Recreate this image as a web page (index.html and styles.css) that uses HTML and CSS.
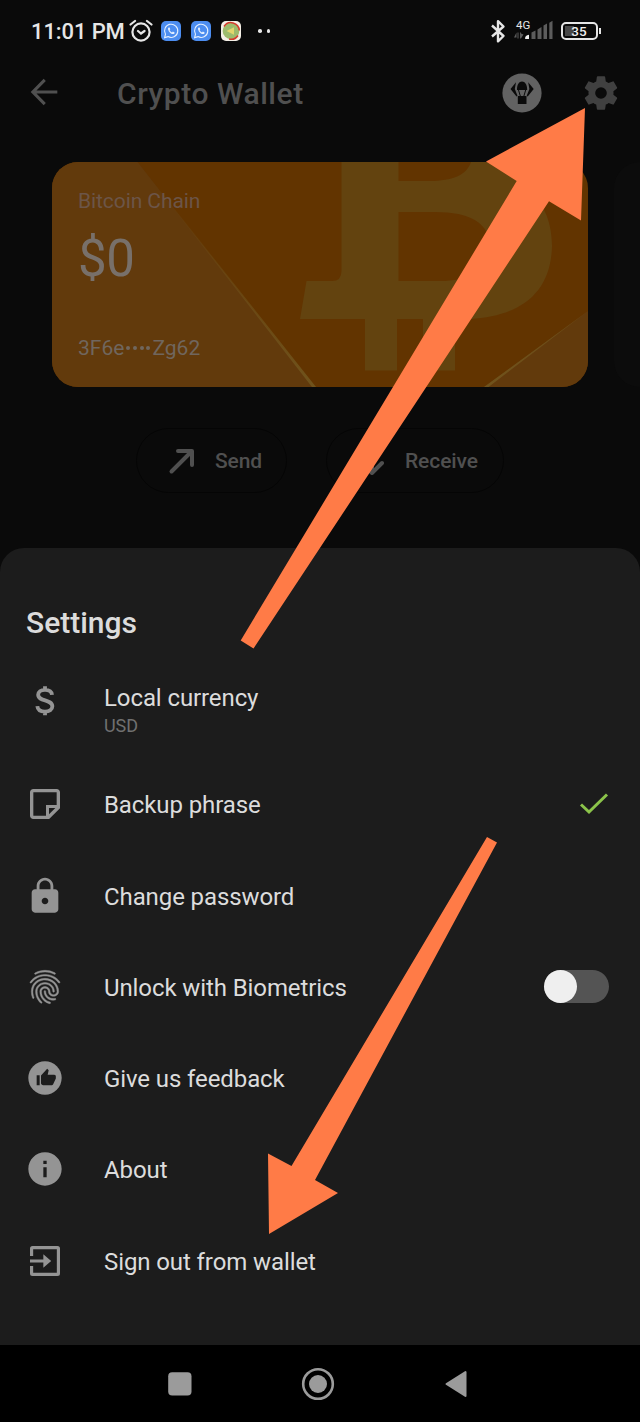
FILE: index.html
```html
<!DOCTYPE html>
<html lang="en">
<head>
<meta charset="utf-8">
<title>Crypto Wallet</title>
<link rel="stylesheet" href="styles.css">
</head>
<body>
<div class="phone">
  <header class="status">
    <span class="clock">11:01 PM</span>
    <svg class="alarm" viewBox="0 0 24 24" width="24" height="24" fill="none" stroke="#e6e6e6" stroke-width="2.2" stroke-linecap="round"><circle cx="12" cy="13" r="8.6"/><path d="M1.5 5.5l4.500-3.500M22.500 5.500L18 2M9 12l3 2.500 3.500-2.500"/></svg>
    <svg class="app" viewBox="0 0 20 20"><rect width="20" height="20" rx="5" fill="#4c8df0"/><path d="M3.600 16.600l.9-3.400a6.600 6.600 0 1 1 2.500 2.400z" fill="none" stroke="#e6f0ff" stroke-width="1.100"/><path d="M7.700 6.500c-1 .6-.9 2 .3 3.900 1.300 1.900 3.300 3 4.700 2.500.9-.4 1-1.200.9-1.500l-1.700-.8-.9.900c-1-.4-2-1.400-2.400-2.400l.7-.8-.7-1.700z" fill="#e6f0ff"/></svg>
    <svg class="app" viewBox="0 0 20 20"><rect width="20" height="20" rx="5" fill="#4c8df0"/><path d="M3.600 16.600l.9-3.400a6.600 6.600 0 1 1 2.500 2.400z" fill="none" stroke="#e6f0ff" stroke-width="1.100"/><path d="M7.700 6.500c-1 .6-.9 2 .3 3.900 1.300 1.900 3.300 3 4.700 2.500.9-.4 1-1.200.9-1.500l-1.700-.8-.9.900c-1-.4-2-1.400-2.400-2.400l.7-.8-.7-1.700z" fill="#e6f0ff"/></svg>
    <svg class="app" viewBox="0 0 20 20"><rect width="20" height="20" rx="5" fill="#f4efe6"/><circle cx="10" cy="10" r="8.300" fill="#9dbb6c"/><path d="M3 5.500A8.300 8.300 0 0 1 18.300 9.500M17 14.500A8.300 8.300 0 0 1 8 18" fill="none" stroke="#d33b2c" stroke-width="1.500"/><path d="M5.500 10L13 6.200v7.600z" fill="#e3d66d"/></svg>
    <span class="more"><i></i><i></i></span>
    <span class="spacer"></span>
    <svg class="bt" viewBox="0 0 16 24" width="16" height="24" fill="none" stroke="#e6e6e6" stroke-width="2.400" stroke-linejoin="round"><path d="M2 6.500l11.500 10.500L8 22.300V2.200L13.500 7.500 2 17.500"/></svg>
    <svg class="signal" viewBox="0 0 40 24" width="40" height="24"><text x="2" y="9.500" class="net">4G</text><g fill="#5c5c5c"><path d="M2.500 13.500v5H0zM3.500 13.500h1v6h-1zM6 13.500h1v6H6zM7 19.500v-5l2.500 1z"/><path d="M17.500 13.500l4-2v8.500h-4zM23.500 10.500l4-2.500v12h-4zM29.500 6.500l3.500-2v15.500h-3.500zM35.300 3.700l3.200-2v18.300h-3.200z"/></g><path d="M11 19.500q0-3 4-3.800V20h-3.500z" fill="#f0f0f0"/></svg>
    <span class="battery"><b>35</b></span>
  </header>

  <nav class="appbar">
    <svg class="back" viewBox="0 0 24 24" width="40" height="40" fill="#505050"><path d="M20 11.100H7.500l5.600-5.700L11.800 4.100 4 12l7.800 7.900 1.300-1.300-5.600-5.700H20z"/></svg>
    <h1 class="title">Crypto Wallet</h1>
    <svg class="drop" viewBox="0 0 40 40" width="40" height="40"><circle cx="20" cy="20" r="19.600" fill="#626262"/><path d="M15 17C15 11.500 17 8.600 20 8.600S25.200 11.500 25.200 17zM14 9.200L8.500 16l6 7.500 1-.7L12.800 16zM26.200 9.200L31.700 16l-6 7.500-1-.7L27.400 16zM15.800 23h8.700v8h-8.700z" fill="#0a0a0a"/><path d="M16.500 17l1.800 6M23.700 17l-1.800 6" stroke="#0a0a0a" stroke-width="1"/></svg>
    <svg class="gear" viewBox="0 0 24 24" width="40" height="40" fill="#404040"><path d="M19.430 12.980c.04-.32.070-.64.070-.98s-.03-.66-.07-.98l2.110-1.650c.19-.15.240-.42.120-.64l-2-3.460c-.12-.22-.39-.3-.61-.22l-2.490 1c-.52-.4-1.080-.73-1.690-.98l-.38-2.650C14.460 2.180 14.250 2 14 2h-4c-.25 0-.46.180-.49.420l-.38 2.650c-.61.250-1.170.590-1.690.98l-2.490-1c-.23-.09-.49 0-.61.220l-2 3.460c-.13.220-.07.490.12.640l2.110 1.650c-.04.320-.07.650-.07.980s.03.660.07.980l-2.110 1.650c-.19.150-.24.420-.12.640l2 3.460c.12.220.39.300.61.220l2.490-1c.52.400 1.080.730 1.690.98l.38 2.650c.03.240.24.420.49.420h4c.25 0 .46-.18.490-.42l.38-2.650c.61-.25 1.170-.59 1.690-.98l2.490 1c.23.090.49 0 .61-.22l2-3.460c.12-.22.070-.49-.12-.64zM12 15.500a3.500 3.500 0 1 1 0-7 3.500 3.500 0 0 1 0 7z"/></svg>
  </nav>

  <section class="carousel">
    <article class="card">
      <svg class="card-art" viewBox="52 162 536 225" preserveAspectRatio="none">
        <defs><linearGradient id="edge" x1="0" y1="0" x2="0" y2="1"><stop offset="0.100" stop-color="#70531c" stop-opacity="0"/><stop offset="1" stop-color="#70531c"/></linearGradient></defs>
        <rect x="52" y="162" width="536" height="225" fill="#623400"/>
        <path d="M52 162h85.500L314 387H52zM484 387L588 311v76z" fill="#623a0c"/>
        <path d="M137.500 162L312 387h4zM484 387h4.500L588 311z" fill="url(#edge)"/>
        <path fill-rule="evenodd" fill="#63430f" d="M341.500 162H545C544 172 538 183 526 190C542 199 552 220 552 246C551 292 522 316 470 319H455V370.500H423V319H397V370.500H365V319H300L306.500 281H332Q341.500 281 341.500 271ZM398.500 162V181H430C452 181 467 175 471 162ZM398.500 212V281H440C472 281 490 270 490 247C490 223 470 212 435 212Z"/>
      </svg>
      <div class="card-text">
        <span class="chain">Bitcoin Chain</span>
        <strong class="amount">$0</strong>
        <span class="address">3F6e<span class="dots"><i></i><i></i><i></i><i></i></span>Zg62</span>
      </div>
    </article>
    <div class="card-next"></div>
  </section>

  <div class="actions">
    <div class="pill send"><svg viewBox="0 0 28 28" width="28" height="28" fill="none" stroke="#505050" stroke-width="4" stroke-linecap="round"><path d="M3.500 24.500L23.500 4.500M10 4H24v14" stroke-linejoin="round"/></svg><span>Send</span></div>
    <div class="pill receive"><svg viewBox="0 0 28 28" width="28" height="28" fill="none" stroke="#505050" stroke-width="4" stroke-linecap="round"><path d="M14 2V26M4 16l10 10 10-10" stroke-linejoin="round"/></svg><span>Receive</span></div>
  </div>

  <main class="sheet">
    <h2 class="heading">Settings</h2>
    <ul class="list">
      <li class="row currency">
        <svg class="icon" viewBox="0 0 24 24"><path d="M16.200 8.300C16 6.300 14.500 5.300 12 5.300S7.900 6.500 7.900 8.300c0 4.200 8.500 2.500 8.500 6.900 0 2-1.800 3.200-4.400 3.200s-4.400-1.200-4.600-3.300M12 3.200v2M12 18.400v2.200" fill="none" stroke="#949494" stroke-width="2.300"/></svg>
        <div class="label"><span>Local currency</span><small>USD</small></div>
      </li>
      <li class="row">
        <svg class="icon" viewBox="0 0 24 24"><path d="M19 5v7.600h-6.400V19H5V5h14m0-2H5c-1.100 0-2 .9-2 2v14c0 1.100.9 2 2 2h9.500l6.500-6.500V5c0-1.100-.9-2-2-2zM14.400 14.400h3.800L14.400 18.200z" fill-rule="evenodd"/></svg>
        <div class="label">Backup phrase</div>
        <svg class="check" viewBox="0 0 30 24" width="30" height="24" fill="none" stroke="#8bc34a" stroke-width="3"><path d="M2 12.500l8 7.500L28 2.500"/></svg>
      </li>
      <li class="row">
        <svg class="icon" viewBox="0 0 24 24"><path d="M18 8h-1V6c0-2.760-2.240-5-5-5S7 3.240 7 6v2H6c-1.100 0-2 .9-2 2v10c0 1.100.9 2 2 2h12c1.100 0 2-.9 2-2V10c0-1.100-.9-2-2-2zm-6 9c-1.100 0-2-.9-2-2s.9-2 2-2 2 .9 2 2-.9 2-2 2zm3.300-9H8.700V6c0-1.820 1.480-3.300 3.300-3.300s3.300 1.480 3.300 3.300v2z"/></svg>
        <div class="label">Change password</div>
      </li>
      <li class="row">
        <svg class="icon" viewBox="0 0 24 24"><path d="M17.810 4.470c-.08 0-.16-.02-.23-.06C15.660 3.420 14 3 12.010 3c-1.980 0-3.860.47-5.570 1.410-.24.130-.54.040-.68-.2-.13-.24-.04-.55.2-.68C7.820 2.520 9.860 2 12.010 2c2.130 0 3.990.47 6.030 1.520.25.130.34.430.21.670-.09.180-.26.280-.44.280zM3.500 9.720c-.1 0-.2-.03-.29-.09-.23-.16-.28-.47-.12-.7.99-1.400 2.250-2.500 3.750-3.270C9.980 4.040 14 4.030 17.150 5.650c1.500.77 2.760 1.860 3.750 3.250.16.220.11.540-.12.700-.23.160-.54.110-.7-.12-.9-1.260-2.040-2.250-3.390-2.940-2.870-1.470-6.540-1.470-9.400.01-1.360.7-2.500 1.700-3.400 2.960-.08.140-.23.210-.39.210zm6.250 12.070c-.13 0-.26-.05-.35-.15-.87-.87-1.340-1.430-2.010-2.640-.69-1.230-1.050-2.730-1.050-4.340 0-2.970 2.540-5.390 5.660-5.390s5.660 2.420 5.660 5.390c0 .28-.22.5-.5.5s-.5-.22-.5-.5c0-2.420-2.090-4.390-4.660-4.390-2.570 0-4.660 1.970-4.660 4.390 0 1.440.32 2.770.93 3.850.64 1.150 1.080 1.640 1.850 2.420.19.200.19.510 0 .71-.11.100-.24.150-.37.150zm7.170-1.850c-1.190 0-2.240-.3-3.100-.89-1.490-1.010-2.380-2.650-2.380-4.390 0-.28.220-.5.5-.5s.5.220.5.500c0 1.410.72 2.740 1.940 3.560.71.480 1.540.71 2.540.71.240 0 .64-.03 1.040-.1.270-.05.530.130.580.410.05.270-.13.530-.41.580-.57.110-1.070.12-1.210.12zM14.910 22c-.04 0-.09-.01-.13-.02-1.590-.44-2.630-1.030-3.720-2.100-1.400-1.390-2.170-3.240-2.170-5.220 0-1.620 1.380-2.940 3.080-2.940 1.700 0 3.080 1.320 3.080 2.940 0 1.070.93 1.940 2.080 1.940s2.080-.87 2.080-1.940c0-3.770-3.250-6.830-7.250-6.830-2.840 0-5.440 1.580-6.610 4.030-.39.810-.59 1.760-.59 2.800 0 .78.070 2.010.67 3.610.1.260-.03.550-.29.640-.26.100-.55-.04-.64-.29-.49-1.310-.73-2.610-.73-3.960 0-1.200.23-2.290.68-3.240 1.330-2.790 4.280-4.600 7.510-4.600 4.550 0 8.250 3.510 8.250 7.830 0 1.620-1.380 2.940-3.080 2.940s-3.080-1.320-3.080-2.940c0-1.070-.93-1.940-2.080-1.940s-2.080.87-2.080 1.940c0 1.710.66 3.310 1.870 4.510.95.940 1.860 1.460 3.270 1.850.27.070.42.350.35.610-.05.230-.26.380-.47.380z" stroke="#949494" stroke-width=".25"/></svg>
        <div class="label">Unlock with Biometrics</div>
        <span class="toggle"><i></i></span>
      </li>
      <li class="row">
        <svg class="icon" viewBox="0 0 24 24"><circle cx="12" cy="12" r="10"/><path d="M7 10.300h1.800v6H7zM9.600 10.500l3.700-4 .9.900-.6 2.600h3.900c.7 0 1 .5 1 1v1.300l-1.600 3.500c-.2.400-.5.500-.9.500h-5c-.8 0-1.400-.4-1.400-1.100z" fill="#1c1c1c"/></svg>
        <div class="label">Give us feedback</div>
      </li>
      <li class="row">
        <svg class="icon" viewBox="0 0 24 24"><path d="M12 2C6.480 2 2 6.480 2 12s4.480 10 10 10 10-4.480 10-10S17.520 2 12 2zm1 15h-2v-6h2v6zm0-8h-2V7h2v2z"/></svg>
        <div class="label">About</div>
      </li>
      <li class="row">
        <svg class="icon" viewBox="0 0 24 24"><path d="M3 9V4.500A1.500 1.500 0 0 1 4.500 3h15A1.500 1.500 0 0 1 21 4.500v15a1.500 1.500 0 0 1-1.500 1.500h-15A1.500 1.500 0 0 1 3 19.500V15h1.900v4.100h14.200V4.900H4.900V9zM3 11.100h8V8l4.700 4-4.700 4v-3.100H3z"/></svg>
        <div class="label">Sign out from wallet</div>
      </li>
    </ul>
  </main>

  <footer class="navbar">
    <svg viewBox="0 0 24 24" width="24" height="24"><rect x=".2" y=".2" width="23.300" height="23.300" rx="4" fill="#9b9b9b"/></svg>
    <svg viewBox="0 0 34 34" width="34" height="34"><circle cx="17" cy="17" r="14.800" fill="none" stroke="#9b9b9b" stroke-width="2.600"/><circle cx="17" cy="17" r="9" fill="#9b9b9b"/></svg>
    <svg viewBox="0 0 24 28" width="24" height="28"><path d="M2.500 14L21.500 2v24z" fill="#9b9b9b" stroke="#9b9b9b" stroke-width="2" stroke-linejoin="round"/></svg>
  </footer>

  <svg class="pointers" viewBox="0 0 640 1422" width="640" height="1422" fill="#ff7b47">
    <path d="M585 108L486 161.500 516.700 181 240.700 640.500 253.500 648.500 549 201.300 581 220.500z"/>
    <path d="M269 1234L268 1153.500 291.500 1166 487 837 497 842.500 315 1180 338 1193z"/>
  </svg>
</div>
</body>
</html>
```
FILE: styles.css
```css
* { box-sizing: border-box; }
body { margin: 0; background: #0a0a0a; font-family: Roboto, "Liberation Sans", sans-serif; color: #dcdcdc; }
h1, h2, ul { margin: 0; padding: 0; }
svg { display: block; flex: none; }
.phone { position: relative; width: 640px; height: 1422px; display: flex; flex-direction: column; overflow: hidden; }
.pointers { position: absolute; inset: 0; }

.status { height: 62px; flex: none; display: flex; align-items: center; padding: 0 42.500px 0 31px; }
.clock { width: 98px; font-size: 22px; font-weight: 500; color: #e6e6e6; white-space: nowrap; letter-spacing: -.1px; padding-top: 1px; }
.alarm { margin-top: -1px; }
.app { width: 20px; height: 20px; margin-left: 8px; }
.app + .app { margin-left: 10px; }
.more { display: flex; gap: 5px; margin-left: 17px; }
.more i { width: 3.500px; height: 3.500px; border-radius: 50%; background: #e6e6e6; }
.spacer { flex: 1; }
.bt { margin-right: 8px; }
.signal { margin-right: 7px; }
.net { font-size: 11.500px; fill: #e6e6e6; }
.battery { position: relative; width: 37px; height: 18px; border: 2px solid #e6e6e6; border-radius: 5px; display: flex; align-items: center; justify-content: center; font-size: 13.500px; background: linear-gradient(#484848, #484848) 2px 2px / 9px 10px no-repeat; }
.battery::after { content: ""; position: absolute; left: 36px; top: 4px; width: 2.500px; height: 6px; background: #e6e6e6; }
.battery b { font-weight: 500; color: #f0f0f0; }

.appbar { height: 62px; flex: none; display: flex; align-items: center; padding: 0 19.500px 0 24px; }
.back { margin-top: -2px; }
.title { margin-left: 53px; flex: 1; font-size: 30px; font-weight: 500; line-height: 40px; color: #505050; letter-spacing: .55px; padding-top: 2px; }
.gear { margin-left: 38.500px; }

.carousel { height: 225px; flex: none; margin-top: 38px; padding-left: 52px; display: flex; gap: 26px; overflow: hidden; }
.card { position: relative; width: 536px; height: 225px; flex: none; border-radius: 26px; overflow: hidden; }
.card-art { position: absolute; inset: 0; width: 536px; height: 225px; }
.card-text { position: relative; height: 225px; display: flex; flex-direction: column; padding: 26px 0 0 26px; color: #6c5548; font-size: 21px; line-height: 26px; }
.chain { letter-spacing: -.08px; }
.amount { font-size: 51px; font-weight: 400; line-height: 60px; margin-top: 15px; letter-spacing: -.5px; color: #78706a; }
.address { margin-top: 46px; color: #70665e; display: flex; align-items: center; }
.dots { display: flex; gap: 2.700px; margin: 0 2px 0 2px; }
.dots i { width: 4px; height: 4px; border-radius: 50%; background: #70665e; }
.card-next { width: 60px; flex: none; border-radius: 26px; background: #0c0c0c; }

.actions { display: flex; flex: none; gap: 39px; padding-left: 136px; margin-top: 41px; }
.pill { height: 65px; border: 1.500px solid #050505; border-radius: 33px; display: flex; align-items: center; color: #505050; font-size: 21px; font-weight: 500; letter-spacing: -.1px; }
.send { width: 151px; padding-left: 31px; gap: 19px; }
.receive { width: 178px; padding-left: 31px; gap: 19px; }

.sheet { flex: none; margin-top: 55px; height: 797px; background: #1c1c1c; border-radius: 24px 24px 0 0; padding: 55px 31px 0 25px; }
.heading { font-size: 30px; font-weight: 500; line-height: 40px; color: #dcdcdc; padding-left: 1px; }
.list { list-style: none; margin-top: 25.500px; }
.row { height: 91.250px; display: flex; align-items: center; }
.icon { width: 40px; height: 40px; fill: #949494; margin-top: -2px; }
.label { margin-left: 39px; flex: 1; font-size: 24px; line-height: 30px; letter-spacing: -.1px; white-space: nowrap; }
.currency { align-items: flex-start; padding-top: 14px; }
.currency .icon { margin-top: -2px; }
.label small { display: block; font-size: 18px; line-height: 22px; color: #707070; margin-top: 2px; }
.label span { display: block; }
.check { margin-top: -2px; }
.toggle { width: 65px; height: 33px; border-radius: 17px; background: #545454; margin-top: -2px; }
.toggle i { display: block; width: 33px; height: 33px; border-radius: 50%; background: #efefef; }

.navbar { flex: 1; background: #000; display: flex; align-items: center; justify-content: space-between; padding: 0 172px 0 167.500px; }
```
